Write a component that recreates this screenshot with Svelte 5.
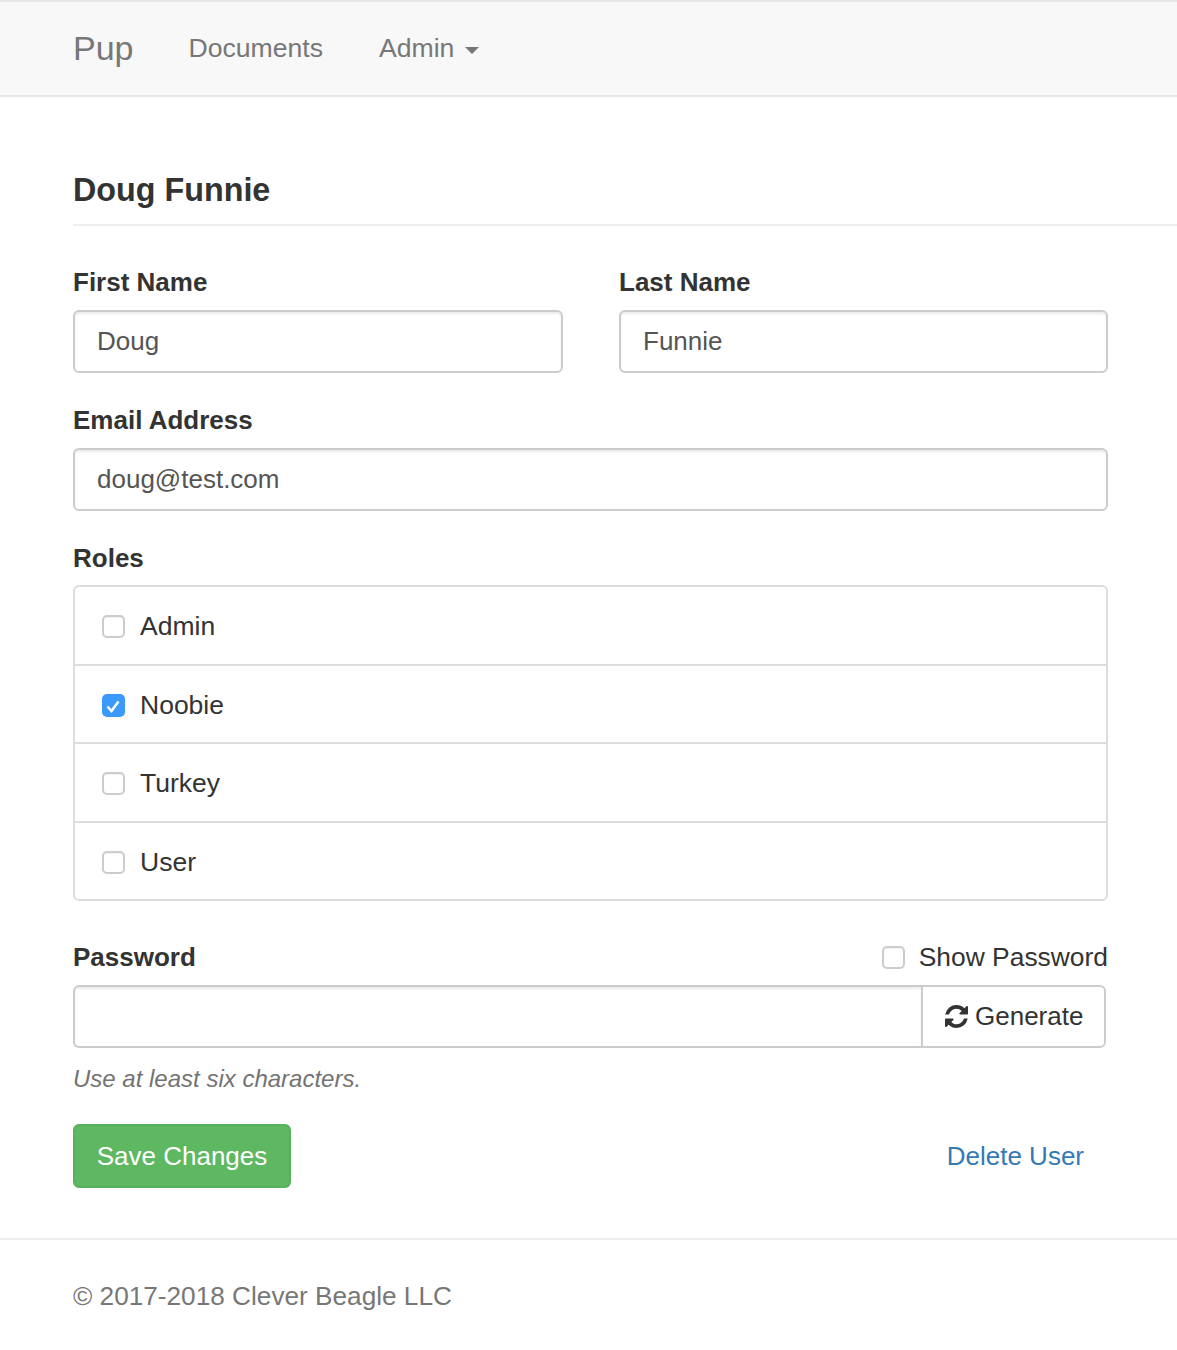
<script>
  const roles = [
    { name: 'Admin', checked: false },
    { name: 'Noobie', checked: true },
    { name: 'Turkey', checked: false },
    { name: 'User', checked: false }
  ];
</script>

<nav class="navbar">
  <a class="brand" href="#top">Pup</a>
  <a class="nav-link" href="#documents">Documents</a>
  <a class="nav-link" href="#admin">Admin <span class="caret"></span></a>
</nav>

<main class="page">
  <h4 class="title">Doug Funnie</h4>
  <form class="form" onsubmit={(e) => e.preventDefault()}>
    <div class="row">
      <div class="group">
        <span class="label">First Name</span>
        <input class="control" type="text" value="Doug" />
      </div>
      <div class="group">
        <span class="label">Last Name</span>
        <input class="control" type="text" value="Funnie" />
      </div>
    </div>
    <div class="group">
      <span class="label">Email Address</span>
      <input class="control" type="text" value="doug@test.com" />
    </div>
    <div class="group roles-group">
      <span class="label">Roles</span>
      <ul class="roles">
        {#each roles as role (role.name)}
          <li>
            <span class="box" class:checked={role.checked}>
              {#if role.checked}
                <svg viewBox="0 0 23 23" width="23" height="23">
                  <path d="M5.500 12.500 L9.500 17 L16.500 7.500" fill="none" stroke="#fff" stroke-width="2.500" />
                </svg>
              {/if}
            </span>
            <span class="role-name">{role.name}</span>
          </li>
        {/each}
      </ul>
    </div>
    <div class="group password-group">
      <div class="password-head">
        <span class="label">Password</span>
        <span class="show"><span class="box"></span>Show Password</span>
      </div>
      <div class="input-group">
        <input class="control joined" type="password" />
        <button class="generate" type="button">
          <svg viewBox="0 0 1536 1536" width="23" height="23">
            <path fill="#333" d="M1511 928q0 5-1 7-64 268-268 434.500T764 1536q-146 0-282.500-55T238 1324l-129 129q-19 19-45 19t-45-19-19-45V960q0-26 19-45t45-19h448q26 0 45 19t19 45-19 45l-137 137q71 66 161 102t187 36q134 0 250-65t186-179q11-17 53-117 8-23 30-23h192q13 0 22.500 9.500t9.500 22.500zm25-800v448q0 26-19 45t-45 19h-448q-26 0-45-19t-19-45 19-45l138-138Q969 256 768 256q-134 0-250 65T332 500q-11 17-53 117-8 23-30 23H50q-13 0-22.500-9.500T18 608v-7q65-268 270-434.500T768 0q146 0 284 55.500T1297 212l130-129q19-19 45-19t45 19 19 45z" />
          </svg>
          Generate
        </button>
      </div>
      <p class="help">Use at least six characters.</p>
    </div>
    <div class="actions">
      <button class="save" type="submit">Save Changes</button>
      <a class="delete" href="#delete">Delete User</a>
    </div>
  </form>
</main>

<footer class="footer">© 2017-2018 Clever Beagle LLC</footer>

<style>
  :global(body) {
    font-family: 'Liberation Sans', Arial, sans-serif;
    font-size: 26px;
    color: #333;
    background: #fff;
    overflow-x: hidden;
  }

  a {
    text-decoration: none;
  }

  .navbar {
    display: flex;
    align-items: center;
    height: 93px;
    padding-left: 73px;
    background: #f8f8f8;
    border-top: 2px solid #e7e7e7;
    border-bottom: 2px solid #e7e7e7;
  }

  .brand {
    font-size: 34px;
    color: #777;
    margin-right: 55px;
  }

  .nav-link {
    font-size: 26.600px;
    color: #777;
    margin-right: 56px;
    display: flex;
    align-items: center;
    gap: 11px;
  }

  .caret {
    width: 0;
    height: 0;
    margin-top: 3px;
    border-top: 7px solid #777;
    border-left: 7px solid transparent;
    border-right: 7px solid transparent;
  }

  .page {
    padding: 0 69px 0 73px;
  }

  .title {
    margin: 74px -69px 0 0;
    padding-bottom: 15px;
    font-size: 32.300px;
    line-height: 38px;
    font-weight: bold;
    color: #333;
    border-bottom: 2px solid #eee;
  }

  .form {
    margin-top: 41px;
  }

  .row {
    display: grid;
    grid-template-columns: 490px 489px;
    gap: 56px;
  }

  .group {
    display: flex;
    flex-direction: column;
    margin-bottom: 32px;
  }

  .label {
    font-weight: bold;
    line-height: 30px;
    margin-bottom: 13px;
  }

  .control {
    box-sizing: border-box;
    width: 100%;
    height: 63px;
    padding: 0 22px;
    font: inherit;
    color: #555;
    background: #fff;
    border: 2px solid #ccc;
    border-radius: 6px;
    box-shadow: inset 0 2px 2px rgba(0, 0, 0, 0.075);
  }

  .roles-group {
    margin-bottom: 41px;
  }

  .roles-group .label {
    margin-bottom: 12px;
  }

  .roles {
    list-style: none;
    margin: 0;
    padding: 0;
    border: 2px solid #ddd;
    border-radius: 6px;
  }

  .roles li {
    box-sizing: border-box;
    display: flex;
    align-items: center;
    height: 78.500px;
    padding: 3px 0 0 27px;
    border-top: 2px solid #ddd;
  }

  .roles li:first-child {
    height: 76.500px;
    border-top: 0;
  }

  .box {
    box-sizing: border-box;
    flex: none;
    display: block;
    width: 23px;
    height: 23px;
    background: #fff;
    border: 2px solid #ccc;
    border-radius: 5px;
    box-shadow: inset 0 1px 1px rgba(0, 0, 0, 0.06);
  }

  .box.checked {
    border: 0;
    background: #3b99fc;
    box-shadow: none;
  }

  .box svg {
    display: block;
  }

  .role-name {
    margin-left: 15px;
    font-size: 26.500px;
  }

  .password-group {
    margin-bottom: 0;
  }

  .password-head {
    display: flex;
    justify-content: space-between;
    align-items: flex-start;
  }

  .show {
    display: flex;
    align-items: center;
    gap: 14px;
    font-size: 26.400px;
    line-height: 30px;
  }

  .input-group {
    display: flex;
    width: 1033px;
  }

  .joined {
    flex: 1;
    min-width: 0;
    border-right: 0;
    border-radius: 6px 0 0 6px;
  }

  .generate {
    display: flex;
    align-items: center;
    gap: 7px;
    box-sizing: border-box;
    width: 185px;
    height: 63px;
    padding: 0 0 0 22px;
    font: inherit;
    color: #333;
    background: #fff;
    border: 2px solid #ccc;
    border-radius: 0 6px 6px 0;
  }

  .help {
    margin: 16px 0 0;
    font-style: italic;
    line-height: 30px;
    font-size: 24px;
    color: #737373;
  }

  .actions {
    display: flex;
    justify-content: space-between;
    align-items: center;
    margin-top: 30px;
    padding-right: 24px;
  }

  .save {
    box-sizing: border-box;
    height: 64px;
    width: 218px;
    padding: 0;
    font: inherit;
    color: #fff;
    background: #5eb761;
    border: 2px solid #56b059;
    border-radius: 6px;
  }

  .delete {
    color: #337ab7;
  }

  .footer {
    margin-top: 50px;
    padding: 41px 0 0 73px;
    border-top: 2px solid #eee;
    font-size: 26.200px;
    line-height: 30px;
    color: #777;
  }
</style>
